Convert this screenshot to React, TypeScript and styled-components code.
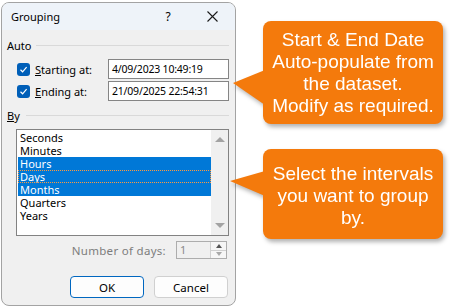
import React from "react";
import styled, { createGlobalStyle } from "styled-components";

const GlobalStyle = createGlobalStyle`
  html, body { margin: 0; padding: 0; background: #ffffff; overflow: hidden; }
  body { font-family: "Noto Sans", "Open Sans", sans-serif; }
`;

const Page = styled.div`
  display: flex;
  align-items: flex-start;
  padding: 2px 0 0 1px;
  width: 456px;
  height: 307px;
  box-sizing: border-box;
`;

const Dialog = styled.div`
  width: 235px;
  height: 304px;
  box-sizing: border-box;
  border: 1px solid #a3a3a3;
  border-radius: 8px;
  background: #f0f0f0;
  display: flex;
  flex-direction: column;
  overflow: hidden;
  font-size: 11px;
  color: #000;
  flex-shrink: 0;
`;

const TitleBar = styled.div`
  height: 27px;
  background: #eef3f9;
  display: flex;
  align-items: center;
  padding-left: 9px;
  flex-shrink: 0;
`;

const Title = styled.div`
  font-size: 11px;
  flex: 1;
`;

const TitleButton = styled.div<{ $w: number }>`
  width: ${(p) => p.$w}px;
  height: 27px;
  display: flex;
  align-items: center;
  justify-content: center;
  font-size: 12px;
`;

const Body = styled.div`
  display: flex;
  flex-direction: column;
  padding: 0 6px 0 5px;
`;

const GroupHeader = styled.div<{ $mt: number; $lineGap: number }>`
  display: flex;
  align-items: center;
  height: 14px;
  margin-top: ${(p) => p.$mt}px;
  gap: ${(p) => p.$lineGap}px;
  &::after {
    content: "";
    flex: 1;
    height: 1px;
    background: #d9d9d9;
  }
`;

const FieldRow = styled.div<{ $mt: number }>`
  display: grid;
  grid-template-columns: 13px 68px 1fr;
  column-gap: 5px;
  align-items: center;
  margin-top: ${(p) => p.$mt}px;
  padding-left: 10px;
  height: 20px;
`;

const Check = styled.div`
  width: 13px;
  height: 13px;
  border-radius: 3px;
  background: #005fb8;
  display: flex;
  align-items: center;
  justify-content: center;
`;

const FieldLabel = styled.div`
  white-space: nowrap;
`;

const TextBox = styled.div`
  height: 20px;
  box-sizing: border-box;
  border: 1px solid #858585;
  background: #fff;
  display: flex;
  align-items: center;
  padding-left: 3px;
  white-space: nowrap;
  font-size: 10.5px;
  letter-spacing: -0.2px;
`;

const ListBox = styled.div`
  margin: 7px 0 0 9px;
  height: 107px;
  box-sizing: border-box;
  border: 1px solid #828282;
  background: #fff;
  display: flex;
`;

const Items = styled.div`
  flex: 1;
  padding: 1px 0 0 1px;
  display: flex;
  flex-direction: column;
`;

const Item = styled.div<{ $sel?: boolean; $focus?: boolean }>`
  height: 13px;
  line-height: 13px;
  padding-left: 2px;
  background: ${(p) => (p.$sel ? "#0078d7" : "transparent")};
  color: ${(p) => (p.$sel ? "#fff" : "#000")};
  outline: ${(p) => (p.$focus ? "1px dotted #ff9a3c" : "none")};
  outline-offset: -1px;
`;

const ScrollBar = styled.div`
  width: 17px;
  background: #f0f0f0;
  display: flex;
  flex-direction: column;
  justify-content: space-between;
  align-items: center;
  padding: 7px 0 7px;
`;

const Tri = styled.div<{ $down?: boolean; $color: string }>`
  width: 0;
  height: 0;
  border-left: 5px solid transparent;
  border-right: 5px solid transparent;
  ${(p) =>
    p.$down
      ? `border-top: 5px solid ${p.$color};`
      : `border-bottom: 5px solid ${p.$color};`}
`;

const DaysRow = styled.div`
  margin-top: 5px;
  height: 18px;
  display: flex;
  align-items: center;
  justify-content: flex-end;
  padding-right: 2px;
  gap: 10px;
`;

const DisabledLabel = styled.div`
  color: #7d7d7d;
  font-size: 11.5px;
  letter-spacing: 0.3px;
`;

const Spinner = styled.div`
  width: 51px;
  height: 18px;
  box-sizing: border-box;
  border: 1px solid #adadad;
  background: #f0f0f0;
  display: flex;
`;

const SpinValue = styled.div`
  flex: 1;
  color: #8a8a8a;
  padding-left: 3px;
  line-height: 16px;
`;

const SpinButtons = styled.div`
  width: 15px;
  border-left: 1px solid #d0d0d0;
  display: flex;
  flex-direction: column;
`;

const SpinHalf = styled.div<{ $bottom?: boolean }>`
  flex: 1;
  display: flex;
  align-items: center;
  justify-content: center;
  border-top: ${(p) => (p.$bottom ? "1px solid #d0d0d0" : "none")};
  background: #f6f6f6;
`;

const SmallTri = styled.div<{ $down?: boolean; $color: string }>`
  width: 0;
  height: 0;
  border-left: 3.5px solid transparent;
  border-right: 3.5px solid transparent;
  ${(p) =>
    p.$down
      ? `border-top: 4px solid ${p.$color};`
      : `border-bottom: 4px solid ${p.$color};`}
`;

const ButtonRow = styled.div`
  margin-top: 17px;
  display: flex;
  justify-content: flex-end;
  gap: 10px;
  padding-right: 1px;
`;

const Button = styled.div<{ $primary?: boolean }>`
  width: 74px;
  height: 22px;
  box-sizing: border-box;
  border-radius: 4px;
  background: #fdfdfd;
  border: 1px solid ${(p) => (p.$primary ? "#0067c0" : "#d0d0d0")};
  display: flex;
  align-items: center;
  justify-content: center;
  font-size: 11.5px;
`;

const CalloutColumn = styled.div`
  display: flex;
  flex-direction: column;
  margin-left: 27px;
  padding-top: 19px;
  gap: 25px;
`;

const Callout = styled.div<{ $h: number }>`
  position: relative;
  width: 180px;
  height: ${(p) => p.$h}px;
  filter: drop-shadow(2px 3px 2px rgba(0, 0, 0, 0.3));
`;

const CalloutBox = styled.div<{ $pt: number }>`
  position: relative;
  height: 100%;
  box-sizing: border-box;
  padding-top: ${(p) => p.$pt}px;
  background: #f47a0c;
  border-radius: 8px;
  color: #fff;
  font-family: "Liberation Sans", Arial, sans-serif;
  font-size: 19px;
  line-height: 22px;
  text-align: center;
  display: flex;
  flex-direction: column;
  justify-content: center;
`;

const Pointer = styled.svg`
  position: absolute;
  left: -33px;
  top: 0;
  overflow: visible;
`;

const CheckMark = () => (
  <svg width="9" height="9" viewBox="0 0 9 9">
    <path d="M1.5 4.8 L3.6 6.8 L7.6 2.2" fill="none" stroke="#fff" strokeWidth="1.2" />
  </svg>
);

const CloseIcon = () => (
  <svg width="11" height="11" viewBox="0 0 11 11">
    <path d="M0.5 0.5 L10.5 10.5 M10.5 0.5 L0.5 10.5" stroke="#1a1a1a" strokeWidth="1.1" />
  </svg>
);

const items = ["Seconds", "Minutes", "Hours", "Days", "Months", "Quarters", "Years"];
const selected = new Set(["Hours", "Days", "Months"]);

export default function App() {
  return (
    <>
      <GlobalStyle />
      <Page>
        <Dialog>
          <TitleBar>
            <Title>Grouping</Title>
            <TitleButton $w={44}>?</TitleButton>
            <TitleButton $w={45}>
              <CloseIcon />
            </TitleButton>
          </TitleBar>
          <Body>
            <GroupHeader $mt={8} $lineGap={5}>Auto</GroupHeader>
            <FieldRow $mt={7}>
              <Check>
                <CheckMark />
              </Check>
              <FieldLabel>
                <u>S</u>tarting at:
              </FieldLabel>
              <TextBox>4/09/2023 10:49:19</TextBox>
            </FieldRow>
            <FieldRow $mt={2}>
              <Check>
                <CheckMark />
              </Check>
              <FieldLabel>
                <u>E</u>nding at:
              </FieldLabel>
              <TextBox>21/09/2025 22:54:31</TextBox>
            </FieldRow>
            <GroupHeader $mt={7} $lineGap={6}>
              <span>
                <u>B</u>y
              </span>
            </GroupHeader>
            <ListBox>
              <Items>
                {items.map((it) => (
                  <Item key={it} $sel={selected.has(it)} $focus={it === "Days"}>
                    {it}
                  </Item>
                ))}
              </Items>
              <ScrollBar>
                <Tri $color="#a3a3a3" />
                <Tri $down $color="#a3a3a3" />
              </ScrollBar>
            </ListBox>
            <DaysRow>
              <DisabledLabel>Number of days:</DisabledLabel>
              <Spinner>
                <SpinValue>1</SpinValue>
                <SpinButtons>
                  <SpinHalf>
                    <SmallTri $color="#555" />
                  </SpinHalf>
                  <SpinHalf $bottom>
                    <SmallTri $down $color="#a8a8a8" />
                  </SpinHalf>
                </SpinButtons>
              </Spinner>
            </DaysRow>
            <ButtonRow>
              <Button $primary>OK</Button>
              <Button>Cancel</Button>
            </ButtonRow>
          </Body>
        </Dialog>
        <CalloutColumn>
          <Callout $h={103}>
            <Pointer width="34" height="103">
              <path d="M3 62 L35 49 L35 84 Z" fill="#f47a0c" />
            </Pointer>
            <CalloutBox $pt={0}>
              <div>Start &amp; End Date</div>
              <div>Auto-populate from</div>
              <div>the dataset.</div>
              <div>Modify as required.</div>
            </CalloutBox>
          </Callout>
          <Callout $h={90}>
            <Pointer width="34" height="90">
              <path d="M0 32 L35 22 L35 47 Z" fill="#f47a0c" />
            </Pointer>
            <CalloutBox $pt={4}>
              <div>Select the intervals</div>
              <div>you want to group</div>
              <div>by.</div>
            </CalloutBox>
          </Callout>
        </CalloutColumn>
      </Page>
    </>
  );
}
